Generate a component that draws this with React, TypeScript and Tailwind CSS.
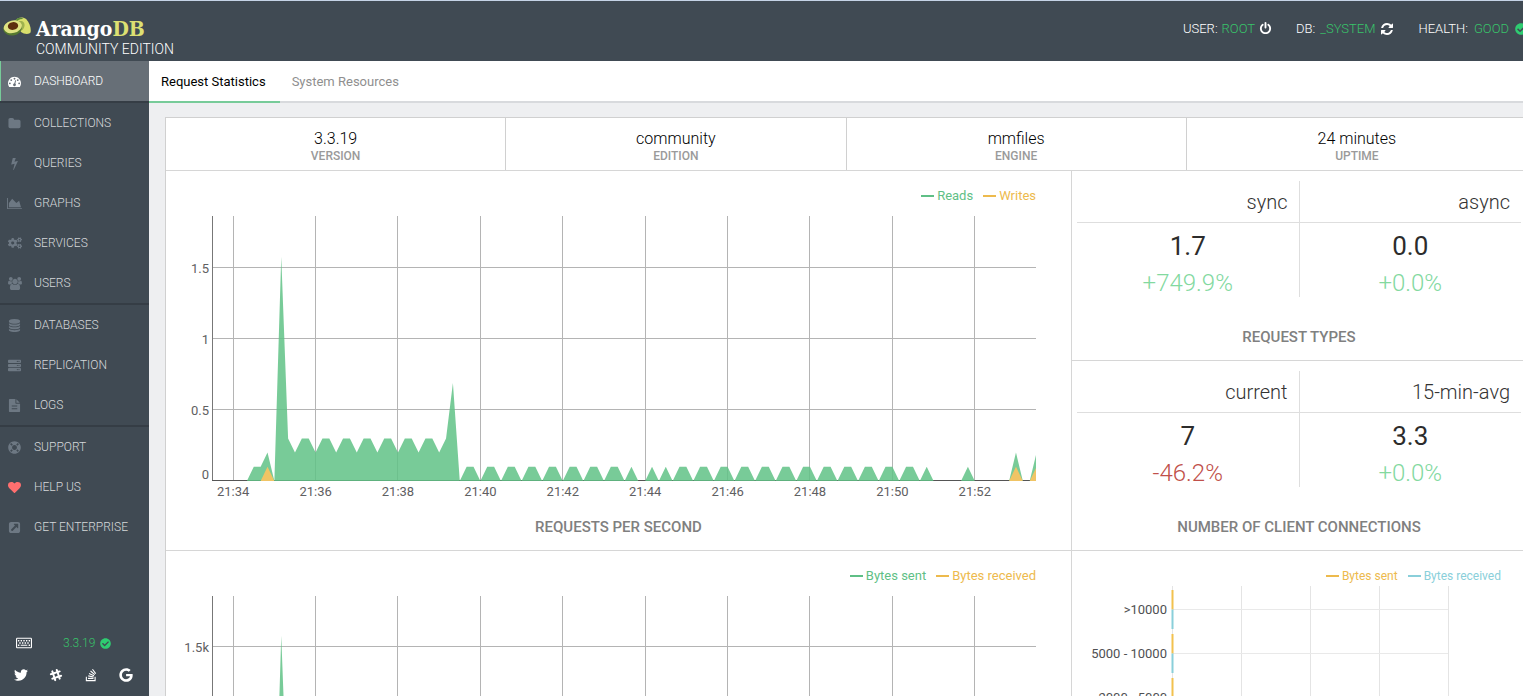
import React from "react";
import {
  FaCheckCircle,
  FaCogs,
  FaGoogle,
  FaLifeRing,
  FaRegKeyboard,
  FaServer,
  FaSlackHash,
  FaStackOverflow,
  FaTwitter,
} from "react-icons/fa";

type IconProps = { className?: string };

function glyph(d: string, size = 1792) {
  return function Glyph({ className }: IconProps) {
    return (
      <svg viewBox={`0 0 ${size} 1792`} className={className} fill="currentColor" aria-hidden="true">
        <path d={d} />
      </svg>
    );
  };
}

const Gauge = glyph(
  "M384 1152q0-53-37.5-90.5t-90.5-37.5-90.5 37.5-37.5 90.5 37.5 90.5 90.5 37.5 90.5-37.5 37.5-90.5zm192-448q0-53-37.5-90.5t-90.5-37.5-90.5 37.5-37.5 90.5 37.5 90.5 90.5 37.5 90.5-37.5 37.5-90.5zm428 481l101-382q6-26-7.5-48.5t-38.5-29.5-48 6.5-30 39.5l-101 382q-60 5-107 43.5t-63 98.5q-20 77 20 146t117 89 146-20 89-117q16-60-6-117t-72-91zm660-33q0-53-37.5-90.5t-90.5-37.5-90.5 37.5-37.5 90.5 37.5 90.5 90.5 37.5 90.5-37.5 37.5-90.5zm-640-640q0-53-37.5-90.5t-90.5-37.5-90.5 37.5-37.5 90.5 37.5 90.5 90.5 37.5 90.5-37.5 37.5-90.5zm448 192q0-53-37.5-90.5t-90.5-37.5-90.5 37.5-37.5 90.5 37.5 90.5 90.5 37.5 90.5-37.5 37.5-90.5zm320 448q0 261-141 483-19 29-54 29h-1402q-35 0-54-29-141-221-141-483 0-182 71-348t191-286 286-191 348-71 348 71 286 191 191 286 71 348z"
);
const Folder = glyph(
  "M1728 608v704q0 92-66 158t-158 66h-1216q-92 0-158-66t-66-158v-960q0-92 66-158t158-66h320q92 0 158 66t66 158v32h672q92 0 158 66t66 158z"
);
const Bolt = glyph(
  "M1333 566q18 20 7 44l-540 1157q-13 25-42 25-4 0-14-2-17-5-25.5-19t-4.5-30l197-808-406 101q-4 1-12 1-18 0-31-11-18-15-13-39l201-825q4-14 16-23t28-9h328q19 0 32 12.5t13 29.5q0 8-5 18l-171 463 396-98q8-2 12-2 19 0 34 15z"
);
const AreaChart = glyph(
  "M2048 1536v128h-2048v-1536h128v1408h1920zm-384-1024l256 896h-1664v-576l448-576 576 576z",
  2048
);
const Group = glyph(
  "M593 896q-162 5-265 128h-134q-82 0-138-40.500t-56-118.500q0-353 124-353 6 0 43.500 21t97.500 42.500 119 21.500q67 0 133-23-5 37-5 66 0 139 81 256zm1071 637q0 120-73 189.500t-194 69.500h-874q-121 0-194-69.500t-73-189.500q0-53 3.500-103.500t14-109 26.500-108.500 43-97.500 62-81 85.500-53.500 111.500-20q10 0 43 21.500t73 48 107 48 135 21.500 135-21.500 107-48 73-48 43-21.500q61 0 111.500 20t85.500 53.500 62 81 43 97.500 26.500 108.500 14 109 3.500 103.500zm-1024-1277q0 106-75 181t-181 75-181-75-75-181 75-181 181-75 181 75 75 181zm704 384q0 159-112.500 271.500t-271.500 112.500-271.500-112.500-112.500-271.500 112.500-271.500 271.500-112.500 271.500 112.500 112.500 271.500zm576 225q0 78-56 118.500t-138 40.500h-134q-103-123-265-128 81-117 81-256 0-29-5-66 66 23 133 23 59 0 119-21.500t97.500-42.500 43.500-21q124 0 124 353zm-128-609q0 106-75 181t-181 75-181-75-75-181 75-181 181-75 181 75 75 181z",
  1920
);
const Database = glyph(
  "M896 768q237 0 443-43t325-127v170q0 69-103 128t-280 93.5-385 34.5-385-34.5-280-93.5-103-128v-170q119 84 325 127t443 43zm0 768q237 0 443-43t325-127v170q0 69-103 128t-280 93.5-385 34.5-385-34.5-280-93.5-103-128v-170q119 84 325 127t443 43zm0-384q237 0 443-43t325-127v170q0 69-103 128t-280 93.5-385 34.5-385-34.5-280-93.5-103-128v-170q119 84 325 127t443 43zm0-1152q208 0 385 34.5t280 93.5 103 128v128q0 69-103 128t-280 93.5-385 34.5-385-34.5-280-93.5-103-128v-128q0-69 103-128t280-93.5 385-34.5z"
);
const FileText = glyph(
  "M1596 476q14 14 28 36h-472v-472q22 14 36 28zm-476 164h544v1056q0 40-28 68t-68 28h-1344q-40 0-68-28t-28-68v-1600q0-40 28-68t68-28h800v544q0 40 28 68t68 28zm160 736v-64q0-14-9-23t-23-9h-704q-14 0-23 9t-9 23v64q0 14 9 23t23 9h704q14 0 23-9t9-23zm0-384v-64q0-14-9-23t-23-9h-704q-14 0-23 9t-9 23v64q0 14 9 23t23 9h704q14 0 23-9t9-23z"
);
const Heart = glyph(
  "M896 1664q-26 0-44-18l-624-602q-10-8-27.5-26t-55.5-65.5-68-97.5-53.5-121-23.5-138q0-220 127-344t351-124q62 0 126.5 21.5t120 58 95.5 68.5 76 68q36-36 76-68t95.5-68.5 120-58 126.5-21.5q224 0 351 124t127 344q0 221-229 450l-623 600q-18 18-44 18z"
);
const ExternalLink = glyph(
  "M1408 928v-480q0-26-19-45t-45-19h-480q-42 0-59 39-17 41 14 70l144 144-534 534q-19 19-19 45t19 45l102 102q19 19 45 19t45-19l534-534 144 144q18 19 45 19 12 0 25-5 39-17 39-59zm256-512v960q0 119-84.5 203.5t-203.5 84.5h-960q-119 0-203.5-84.5t-84.5-203.5v-960q0-119 84.5-203.5t203.5-84.5h960q119 0 203.5 84.5t84.5 203.5z"
);
const Power = glyph(
  "M1664 896q0 156-61 298t-164 245-245 164-298 61-298-61-245-164-164-245-61-298q0-182 80.5-343t226.5-270q43-32 95.5-25t83.5 50q32 42 24.5 94.5t-49.5 84.5q-98 74-151.5 181t-53.5 228q0 104 40.5 198.5t109.5 163.5 163.5 109.5 198.5 40.5 198.5-40.5 163.5-109.5 109.5-163.5 40.5-198.5q0-121-53.5-228t-151.5-181q-42-32-49.5-84.5t24.5-94.5q31-43 84-50t95 25q146 109 226.5 270t80.5 343zm-640-768v640q0 52-38 90t-90 38-90-38-38-90v-640q0-52 38-90t90-38 90 38 38 90z"
);
const Refresh = glyph(
  "M1639 1056q0 5-1 7-64 268-268 434.5t-478 166.5q-146 0-282.5-55t-243.5-157l-129 129q-19 19-45 19t-45-19-19-45v-448q0-26 19-45t45-19h448q26 0 45 19t19 45-19 45l-137 137q71 66 161 102t187 36q134 0 250-65t186-179q11-17 53-117 8-23 30-23h192q13 0 22.5 9.5t9.5 22.5zm25-800v448q0 26-19 45t-45 19h-448q-26 0-45-19t-19-45 19-45l138-138q-148-137-349-137-134 0-250 65t-186 179q-11 17-53 117-8 23-30 23h-199q-13 0-22.5-9.5t-9.5-22.5v-7q65-268 270-434.5t480-166.5q146 0 284 55.5t245 156.5l130-129q19-19 45-19t45 19 19 45z"
);

function Avocado() {
  return (
    <svg viewBox="0 0 28 19" className="h-[19px] w-7 shrink-0" aria-hidden="true">
      <path d="M12 4C15 0 20 -.5 23.500 2.500C26.500 5.500 28.500 12 27.500 15.500C26.500 17.500 21 17.500 18 15Z" fill="#d9df6c" />
      <path d="M12 4C14 .5 18 0 20.500 2C17 1.500 14.500 3 13.500 5Z" fill="#5c8a3a" />
      <path d="M15 4.500C19 3 22 5 21.500 9C21 12 19 14 16 14Z" fill="#9fb24e" />
      <ellipse cx="9.500" cy="11.500" rx="9.300" ry="7" transform="rotate(-8 9.500 11.500)" fill="#55792f" />
      <ellipse cx="9.800" cy="9.800" rx="9.200" ry="6.200" transform="rotate(-14 9.800 9.800)" fill="#dfe383" />
      <ellipse cx="10" cy="9" rx="5.200" ry="3.900" transform="rotate(-8 10 9)" fill="#5d2f0e" />
    </svg>
  );
}

type NavItem = { label: string; icon: React.ComponentType<IconProps>; size?: string; tone?: string };

const navGroups: NavItem[][] = [
  [
    { label: "COLLECTIONS", icon: Folder },
    { label: "QUERIES", icon: Bolt, size: "size-[13px]" },
    { label: "GRAPHS", icon: AreaChart, size: "h-[13px] w-[15px]" },
    { label: "SERVICES", icon: FaCogs, size: "size-[14px]" },
    { label: "USERS", icon: Group, size: "h-[13px] w-[14px]" },
  ],
  [
    { label: "DATABASES", icon: Database, size: "size-[13px]" },
    { label: "REPLICATION", icon: FaServer },
    { label: "LOGS", icon: FileText, size: "size-[13px]" },
  ],
  [
    { label: "SUPPORT", icon: FaLifeRing },
    { label: "HELP US", icon: Heart, tone: "text-[#ff6f6f]" },
    { label: "GET ENTERPRISE", icon: ExternalLink },
  ],
];

function NavLink({ item }: { item: NavItem }) {
  const Icon = item.icon;
  return (
    <li>
      <a href="#" className="flex h-10 items-center text-[#d5d8da]">
        <span className="flex w-[29px] shrink-0 justify-center">
          <Icon className={`${item.size ?? "size-[13px]"} ${item.tone ?? "text-[#6d7883]"}`} />
        </span>
        <span className="pl-[5px]">{item.label}</span>
      </a>
    </li>
  );
}

function Sidebar() {
  return (
    <nav className="flex w-[149px] shrink-0 flex-col bg-[#404a53] text-xs font-light whitespace-nowrap">
      <a href="#" className="flex h-[42px] shrink-0 items-center border-b-2 border-[#353d45] bg-[#676f77] text-white shadow-[inset_1px_0_0_#77cb99]">
        <span className="flex w-[29px] justify-center">
          <Gauge className="size-[13px]" />
        </span>
        <span className="pl-[5px]">DASHBOARD</span>
      </a>
      {navGroups.map((group, i) => (
        <ul key={i} className={i < 2 ? "border-b-2 border-[#353d45]" : ""}>
          {group.map((item) => (
            <NavLink key={item.label} item={item} />
          ))}
        </ul>
      ))}
      <div className="mt-auto flex flex-col gap-4 pb-[13px] text-white">
        <div className="flex h-4 items-center pl-4">
          <button type="button" aria-label="Shortcuts">
            <FaRegKeyboard className="size-4" />
          </button>
          <span className="flex items-center gap-[5px] pl-[31px] text-[#38c46a]">
            3.3.19
            <FaCheckCircle className="size-[11px] text-[#2ecc71]" />
          </span>
        </div>
        <div className="flex h-4 items-center gap-[21px] pl-[14px]">
          <a href="#" aria-label="Twitter"><FaTwitter className="size-[14px]" /></a>
          <a href="#" aria-label="Slack"><FaSlackHash className="size-[14px]" /></a>
          <a href="#" aria-label="Stack Overflow"><FaStackOverflow className="size-[14px]" /></a>
          <a href="#" aria-label="Google"><FaGoogle className="size-[14px]" /></a>
        </div>
      </div>
    </nav>
  );
}

function Header() {
  return (
    <header className="flex h-[61px] shrink-0 justify-between overflow-hidden border-t border-[#c5d3e6] bg-[#404a53] text-white">
      <a href="#" className="flex gap-[5px] pt-4 pl-[3px]">
        <Avocado />
        <span className="flex flex-col whitespace-nowrap">
          <span className="font-['DejaVu_Serif_Condensed','DejaVu_Serif',serif] text-[21px] leading-6 font-bold">
            Arango<span className="text-[#dde072]">DB</span>
          </span>
          <span className="text-sm leading-4 font-light">COMMUNITY EDITION</span>
        </span>
      </a>
      <div className="-mr-1 flex h-[55px] items-center gap-6 text-[13px] font-light whitespace-nowrap">
        <div className="flex items-center gap-1">
          <span>USER:</span>
          <span className="text-[#38c46a]">ROOT</span>
          <button type="button" aria-label="Log out"><Power className="size-[13px]" /></button>
        </div>
        <div className="flex items-center gap-[5px]">
          <span>DB:</span>
          <span className="text-[#38c46a]">_SYSTEM</span>
          <button type="button" aria-label="Switch database"><Refresh className="size-[14px]" /></button>
        </div>
        <div className="flex items-center gap-[6px]">
          <span>HEALTH:</span>
          <span className="text-[#38c46a]">GOOD</span>
          <FaCheckCircle className="size-3 text-[#2ecc71]" />
        </div>
      </div>
    </header>
  );
}

/* One sample every ten seconds, beginning at 21:34:00. */
const SAMPLES = 118;
const reads: number[] = Array.from({ length: SAMPLES }, () => 0);
const writes: number[] = Array.from({ length: SAMPLES }, () => 0);
for (let k = 9; k < 32; k++) reads[k] = k % 3 === 0 ? 0.2 : 0.3;
for (let k = 33; k < 57; k++) reads[k] = k % 3 === 0 ? 0 : 0.1;
for (let k = 65; k < 100; k++) reads[k] = (k - 64) % 3 === 0 ? 0 : 0.1;
const readPeaks: [number, number][] = [
  [3, 0.1], [4, 0.1], [5, 0.2], [7, 1.58], [8, 0.3], [32, 0.69],
  [58, 0.1], [61, 0.1], [63, 0.1], [101, 0.1], [107, 0.1], [114, 0.2], [117, 0.2],
];
readPeaks.forEach(([k, v]) => (reads[k] = v));
[5, 114, 117].forEach((k) => (writes[k] = 0.1));

const PLOT_H = 265;
const START = 2.57;
const STEP = 10 / 12;

function areaPoints(values: number[], unit: number) {
  const pts = values.map((v, k) => `${(START + k * STEP).toFixed(3)},${PLOT_H - v * unit}`);
  return `${START},${PLOT_H} ${pts.join(" ")} ${START + (values.length - 1) * STEP},${PLOT_H}`;
}

type Tick = { value: number; label: string };
type AreaPlotProps = {
  ticks: Tick[];
  hours: string[];
  series: { values: number[]; color: string; opacity: number }[];
  unit: number;
};

function AreaPlot({ ticks, hours, series, unit }: AreaPlotProps) {
  return (
    <svg className="block h-[265px] w-full overflow-visible font-['Roboto',sans-serif]" fontSize="13" fill="#5f6062">
      {Array.from({ length: 10 }, (_, i) => (
        <line key={i} x1={`${START + i * 10}%`} x2={`${START + i * 10}%`} y1="0" y2={PLOT_H} stroke="#b4b4b4" shapeRendering="crispEdges" />
      ))}
      {ticks.filter((t) => t.value > 0).map((t) => (
        <line key={t.label} x1="0" x2="100%" y1={PLOT_H - 0.5 - t.value * unit} y2={PLOT_H - 0.5 - t.value * unit} stroke="#b4b4b4" shapeRendering="crispEdges" />
      ))}
      <line x1="0.5" x2="0.5" y1="0" y2={PLOT_H} stroke="#777777" shapeRendering="crispEdges" />
      <line x1="0" x2="100%" y1={PLOT_H - 0.5} y2={PLOT_H - 0.5} stroke="#555555" shapeRendering="crispEdges" />
      <svg width="100%" height={PLOT_H} viewBox={`0 0 100 ${PLOT_H}`} preserveAspectRatio="none">
        {series.map((s) => (
          <polygon key={s.color} points={areaPoints(s.values, unit)} fill={s.color} fillOpacity={s.opacity} />
        ))}
      </svg>
      {ticks.map((t) => (
        <text key={t.label} x="-3" y={t.value > 0 ? PLOT_H + 5 - t.value * unit : PLOT_H - 2} textAnchor="end">
          {t.label}
        </text>
      ))}
      {hours.map((h, i) => (
        <text key={h} x={`${START + i * 10}%`} y={PLOT_H + 15} textAnchor="middle">
          {h}
        </text>
      ))}
    </svg>
  );
}

function Legend({ items, className }: { items: { label: string; tone: string; bar: string }[]; className: string }) {
  return (
    <ul className={`flex justify-end ${className}`}>
      {items.map((it) => (
        <li key={it.label} className={`flex items-center gap-[3px] ${it.tone}`}>
          <span className={`h-[2px] w-[13px] ${it.bar}`} />
          {it.label}
        </li>
      ))}
    </ul>
  );
}

const GREEN = { tone: "text-[#5fbf86]", bar: "bg-[#5fbf86]" };
const YELLOW = { tone: "text-[#edba4d]", bar: "bg-[#edba4d]" };
const BLUE = { tone: "text-[#8acfda]", bar: "bg-[#8acfda]" };

const facts = [
  { value: "3.3.19", label: "VERSION" },
  { value: "community", label: "EDITION" },
  { value: "mmfiles", label: "ENGINE" },
  { value: "24 minutes", label: "UPTIME" },
];

type Stat = { name: string; value: string; change: string; down?: boolean };

function StatPanel({ title, stats }: { title: string; stats: Stat[] }) {
  return (
    <section className="flex h-[190px] flex-col border-b border-[#d6d6d6] pt-[10px] pr-[6px] pl-[5px]">
      <table className="w-full table-fixed border-collapse">
        <thead>
          <tr>
            {stats.map((s) => (
              <th key={s.name} scope="col" className="h-[41px] border-r border-b border-[#dedede] pt-[2px] pr-[11px] text-right text-xl font-light text-[#333] last:border-r-0">
                {s.name}
              </th>
            ))}
          </tr>
        </thead>
        <tbody>
          <tr>
            {stats.map((s) => (
              <td key={s.name} className="border-r border-[#dedede] pt-[6px] text-center align-top last:border-r-0">
                <div className="text-[26px] leading-[34px] text-[#2c2c2c]">{s.value}</div>
                <div className={`pt-[6px] text-2xl leading-7 font-light ${s.down ? "text-[#c0504a]" : "text-[#83d99f]"}`}>{s.change}</div>
              </td>
            ))}
          </tr>
        </tbody>
      </table>
      <h2 className="pt-[30px] text-center text-[15px] leading-5 font-medium text-[#808080]">{title}</h2>
    </section>
  );
}

function Distribution() {
  const buckets = [">10000", "5000 - 10000", "2000 - 5000"];
  return (
    <section className="pt-4">
      <Legend className="gap-[10px] pr-[26px] text-xs leading-[18px]" items={[{ label: "Bytes sent", ...YELLOW }, { label: "Bytes received", ...BLUE }]} />
      <div className="pt-px pr-[79px] pl-[100px]">
        <svg className="block h-[265px] w-full overflow-visible font-['Roboto',sans-serif]" fontSize="13" fill="#4f5052">
          {[0, 25, 50, 75, 100].map((p) => (
            <line key={p} x1={`${p}%`} x2={`${p}%`} y1="0" y2="265" stroke="#e4e4e4" shapeRendering="crispEdges" />
          ))}
          {buckets.map((b, i) => (
            <g key={b}>
              <line x1="0" x2="100%" y1={23.5 + i * 44} y2={23.5 + i * 44} stroke="#e9e9e9" shapeRendering="crispEdges" />
              <rect x="-0.5" y={4 + i * 44} width="2" height="19.500" fill="#f2c14e" />
              <rect x="-0.5" y={23.5 + i * 44} width="2" height="19.500" fill="#8acfda" />
              <text x="-5" y={28 + i * 44} textAnchor="end">{b}</text>
            </g>
          ))}
        </svg>
      </div>
    </section>
  );
}

function Dashboard() {
  return (
    <main className="flex min-w-0 flex-1 flex-col overflow-hidden bg-[#eeeff1]">
      <div className="flex h-[42px] shrink-0 border-b-2 border-[#d8dadd] bg-white text-[13px]">
        <button type="button" className="-mb-[2px] border-b-2 border-[#77cb99] pt-[2px] pr-[14px] pl-3 text-black">Request Statistics</button>
        <button type="button" className="px-3 pt-[2px] text-[#8f8f8f]">System Resources</button>
      </div>
      <div className="-mr-[5px] pt-[14px] pl-4">
        <div className="border border-[#d0d0d0] bg-white">
          <dl className="grid h-[53px] grid-cols-4 border-b border-[#d6d6d6]">
            {facts.map((f) => (
              <div key={f.label} className="flex flex-col-reverse justify-center border-r border-[#d0d0d0] pt-[6px] text-center last:border-r-0">
                <dt className="text-xs leading-4 font-medium text-[#9a9a9a]">{f.label}</dt>
                <dd className="text-base leading-[18px] font-light text-black">{f.value}</dd>
              </div>
            ))}
          </dl>
          <div className="grid grid-cols-[906fr_455fr]">
            <div className="border-r border-[#d6d6d6]">
              <section className="flex h-[380px] flex-col border-b border-[#d6d6d6] pt-4">
                <Legend className="gap-[10px] pr-[35px] text-[13px] leading-[18px]" items={[{ label: "Reads", ...GREEN }, { label: "Writes", ...YELLOW }]} />
                <div className="pt-[11px] pr-[35px] pl-[46px]">
                  <AreaPlot
                    unit={142}
                    ticks={[
                      { value: 0, label: "0" },
                      { value: 0.5, label: "0.5" },
                      { value: 1, label: "1" },
                      { value: 1.5, label: "1.5" },
                    ]}
                    hours={["21:34", "21:36", "21:38", "21:40", "21:42", "21:44", "21:46", "21:48", "21:50", "21:52"]}
                    series={[
                      { values: reads, color: "#60c286", opacity: 0.85 },
                      { values: writes, color: "#f0c465", opacity: 1 },
                    ]}
                  />
                </div>
                <h2 className="pt-9 text-center text-[15px] leading-5 font-medium text-[#808080]">REQUESTS PER SECOND</h2>
              </section>
              <section className="pt-4">
                <Legend className="gap-[10px] pr-[35px] text-[13px] leading-[18px]" items={[{ label: "Bytes sent", ...GREEN }, { label: "Bytes received", ...YELLOW }]} />
                <div className="pt-[11px] pr-[35px] pl-[46px]">
                  <AreaPlot unit={142.6} ticks={[{ value: 1.5, label: "1.5k" }]} hours={[]} series={[{ values: reads, color: "#60c286", opacity: 0.85 }]} />
                </div>
              </section>
            </div>
            <div>
              <StatPanel
                title="REQUEST TYPES"
                stats={[
                  { name: "sync", value: "1.7", change: "+749.9%" },
                  { name: "async", value: "0.0", change: "+0.0%" },
                ]}
              />
              <StatPanel
                title="NUMBER OF CLIENT CONNECTIONS"
                stats={[
                  { name: "current", value: "7", change: "-46.2%", down: true },
                  { name: "15-min-avg", value: "3.3", change: "+0.0%" },
                ]}
              />
              <Distribution />
            </div>
          </div>
        </div>
      </div>
    </main>
  );
}

export default function App() {
  return (
    <div className="flex h-screen flex-col overflow-hidden font-['Roboto',sans-serif]">
      <Header />
      <div className="flex min-h-0 flex-1">
        <Sidebar />
        <Dashboard />
      </div>
    </div>
  );
}
